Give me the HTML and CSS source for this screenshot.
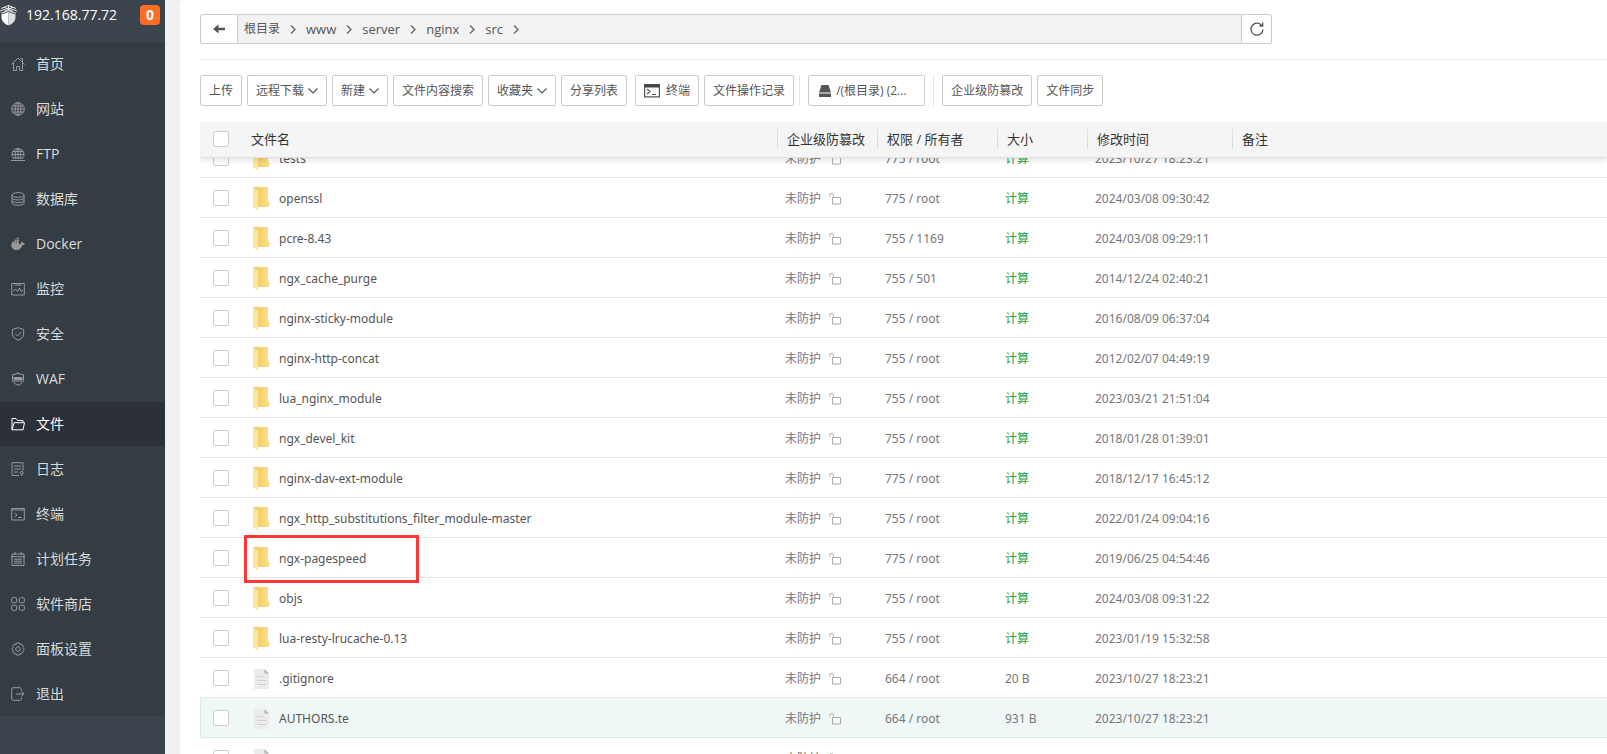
FILE: index.html
```html
<!DOCTYPE html>
<html lang="zh-CN">
<head>
<meta charset="utf-8">
<meta name="viewport" content="width=device-width, initial-scale=1">
<title>文件</title>
<link rel="stylesheet" href="styles.css">
</head>
<body>
<svg class="defs" aria-hidden="true">
  <defs>
    <linearGradient id="fold" x1="0" y1="0" x2="1" y2="0"><stop offset="0" stop-color="#f0c95f"/><stop offset="1" stop-color="#ffe08a"/></linearGradient>
    <symbol id="folder" viewBox="0 0 17 24"><path d="M1 0h14v13l1.500 2v5H4z" fill="url(#fold)"/><path d="M0 0l5 4V24L0 20z" fill="#ffe6a0"/></symbol>
    <symbol id="file" viewBox="0 0 15 20"><path d="M0 0h10.500L15 4.500V20H0z" fill="#ececec"/><path d="M10.500 0L15 4.500h-4.500z" fill="#b4b4b4"/><path d="M3 7.500h7M3 11.500h9M3 15.500h9" stroke="#d0d0d0"/></symbol>
    <symbol id="lock" viewBox="0 0 13 12"><path d="M3.500 4.500h8v6.500h-8zM.5 3.500V2.500a2 2 0 0 1 4 0v2" fill="none" stroke="#aaa"/></symbol>
    <symbol id="right" viewBox="0 0 6 9"><path d="M1 .5l4 4-4 4" fill="none" stroke="#666" stroke-width="1.400"/></symbol>
    <symbol id="down" viewBox="0 0 10 6"><path d="M.5 .5L5 5 9.500 .5" fill="none" stroke="#555" stroke-width="1.200"/></symbol>
  </defs>
</svg>
<div class="app">
  <aside class="sidebar">
    <header class="host">
      <svg class="logo" viewBox="0 0 18 21"><path d="M1 3.500L8.500 .5 16 3.500M0 6l8.500-3L17 6M1 8.200l7.500-2.500L16 8.200M4 2l9 4.500M13 2L4 6.500M8.500 0v6" fill="none" stroke="#e8eaec"/><path d="M1.500 9.500l7-2.500v13.500C4 18.500 1.500 16 1.500 12z" fill="#fff"/><path d="M15.500 9.500l-7-2.500v13.500c4.500-2 7-4.500 7-8.500z" fill="#dcdee0"/></svg>
      <span class="ip">192.168.77.72</span>
      <span class="badge">0</span>
    </header>
    <nav class="menu">
      <a href="#"><svg viewBox="0 0 14 14"><path d="M.5 7.500L7 1l6.500 6.500M2.500 6v7.500h3v-4h3v4h3V6M9.500 1.500h2V5"/></svg>首页</a>
      <a href="#"><svg viewBox="0 0 14 14"><circle cx="7" cy="7" r="6.300"/><ellipse cx="7" cy="7" rx="3" ry="6.300"/><path d="M7 1v12M1 7h12M1.500 4h11M1.500 10h11"/></svg>网站</a>
      <a href="#"><svg viewBox="0 0 14 14"><path d="M2.500 11.500a6 6 0 1 1 9 0M5 12c-1.500-4-1-8 2-11 3 3 3.500 7 2 11M7 1v11M1 7.500h12M2 4.500h10M0 13.500h14M2 11h10"/></svg>FTP</a>
      <a href="#"><svg viewBox="0 0 14 14"><ellipse cx="7" cy="3" rx="6" ry="2.400"/><path d="M1 3v8c0 3 12 3 12 0V3M1 5.700c0 3 12 3 12 0M1 8.400c0 3 12 3 12 0"/></svg>数据库</a>
      <a href="#"><svg viewBox="0 0 14 14"><path class="solid" d="M0 7h10c.3-1 .2-2 .8-2.700.7.500 1 1 1 1.700.8 0 1.500.1 2.200.5-.5 1-1.300 1.500-2.500 1.500C10.500 11 8.500 13 5.500 13 2 13 .3 10.500 0 7zM1.200 4.600h2v2.500h-2zM3.500 4.600h2v2.500h-2zM5.800 4.600h2v2.500h-2zM3.500 2.400h2v1.900h-2zM5.800 2.400h2v1.900h-2zM5.800.5h2v1.600h-2z"/></svg>Docker</a>
      <a href="#"><svg viewBox="0 0 14 14"><path d="M.7 1.500h12.600v11.500H.7zM3.500 3h7M2.500 9.500l2-2.500 2 2.500L8.500 6l1.500 3.500 2-1.500"/></svg>监控</a>
      <a href="#"><svg viewBox="0 0 14 14"><path d="M7 .7L12.700 2.500V7c0 3-2.700 5-5.700 6.300C4 12 1.300 10 1.300 7V2.500zM4.200 6.700l2.300 2.300 3.800-3.800"/></svg>安全</a>
      <a href="#"><svg viewBox="0 0 14 14"><path d="M7 .7L9 2l3.500.7V7c0 3.500-2.500 5-5.500 6.300C4 12 1.500 10.500 1.500 7V2.700L5 2z"/><path class="solid" d="M2.500 5h9v3h-9z"/><path d="M3 9h8M6 1.500h2"/></svg>WAF</a>
      <a href="#" class="active" aria-current="page"><svg viewBox="0 0 14 14"><path d="M1 12.800V1.500h4l1.500 2h5.500v2M1 12.800L3 5.700h10.500l-1.500 7.100z"/></svg>文件</a>
      <a href="#"><svg viewBox="0 0 14 14"><path d="M8 13.500H1V.7h11v8M3 4h7M3 7h7M3 10h4"/><circle cx="10.700" cy="11" r="1.500"/><path d="M10.700 12.500v1.500"/></svg>日志</a>
      <a href="#"><svg viewBox="0 0 14 14"><path d="M.7 1.500h12.600v11.500H.7zM1 3h12M3.500 6l2.500 2-2.500 2M7 10.500h3.500"/></svg>终端</a>
      <a href="#"><svg viewBox="0 0 14 14"><path d="M1 2h12v11.500H1zM0 4.700h14M4 0v3M10 0v3M3 7.200h8M3 9.200h8M3 11.200h8"/></svg>计划任务</a>
      <a href="#"><svg viewBox="0 0 14 14"><rect x=".7" y=".7" width="5" height="5" rx="1"/><rect x="8.300" y=".7" width="5" height="5" rx="1"/><rect x=".7" y="8.300" width="5" height="5" rx="1"/><rect x="8.300" y="8.300" width="5" height="5" rx="1"/></svg>软件商店</a>
      <a href="#"><svg viewBox="0 0 14 14"><path d="M5.500 1h3l.5 1.500 1.800-.3 1.500 2L11.800 5.500 13.300 7l-1.500 1.500.5 1.300-1.500 2L9 11.500 8.500 13h-3L5 11.500l-1.800.3-1.500-2 .5-1.300L.7 7l1.500-1.500-.5-1.300 1.500-2L5 2.500z"/><circle cx="7" cy="7" r="2.300"/></svg>面板设置</a>
      <a href="#"><svg viewBox="0 0 14 14"><path d="M10.500 3.500V2L9 .7H1.700L.7 2v10l1 1.300H9l1.500-1.300v-1.500M5 7h8M10.500 4.500L13 7l-2.500 2.500"/></svg>退出</a>
    </nav>
  </aside>
  <main class="panel">
    <div class="pathbar">
      <button class="back" aria-label="返回"><svg viewBox="0 0 12 10"><path d="M0 5l5.500-4.500V3.700H12v2.600H5.500v3.200z" fill="#555"/></svg></button>
      <nav class="crumbs" aria-label="路径">
        <a href="#">根目录</a><svg><use href="#right"/></svg>
        <a href="#" class="latin">www</a><svg><use href="#right"/></svg>
        <a href="#" class="latin">server</a><svg><use href="#right"/></svg>
        <a href="#" class="latin">nginx</a><svg><use href="#right"/></svg>
        <a href="#" class="latin">src</a><svg><use href="#right"/></svg>
      </nav>
      <button class="refresh" aria-label="刷新"><svg viewBox="0 0 14 14"><path d="M12.400 4.500A6 6 0 1 0 13 7.500M12.700 .5v3.500H9.500" fill="none" stroke="#555" stroke-width="1.300"/></svg></button>
    </div>
    <div class="toolbar">
      <div class="group">
        <button>上传</button>
        <button>远程下载<svg class="caret"><use href="#down"/></svg></button>
        <button>新建<svg class="caret"><use href="#down"/></svg></button>
        <button>文件内容搜索</button>
        <button>收藏夹<svg class="caret"><use href="#down"/></svg></button>
        <button>分享列表</button>
      </div>
      <div class="group">
        <button><svg class="term" viewBox="0 0 16 14"><path d="M.6.6h14.800v12.300H.6zM3 5l3 2.500L3 10M8 10.500h4" fill="none" stroke="#555" stroke-width="1.200"/><path d="M.5.5h15v3H.5z" fill="#444"/></svg>终端</button>
        <button>文件操作记录</button>
      </div>
      <div class="group ruled">
        <button class="disk"><svg viewBox="0 0 12 12"><path d="M2.500 0h7L12 7.500H0zM0 8.500h12V12H0z" fill="#555"/></svg>/(根目录) (2...</button>
      </div>
      <div class="group ruled">
        <button>企业级防篡改</button>
        <button>文件同步</button>
      </div>
    </div>
    <div class="scroller">
      <table class="files">
        <colgroup><col class="c-check"><col class="c-name"><col class="c-guard"><col class="c-perm"><col class="c-size"><col class="c-time"><col></colgroup>
        <thead><tr><th><input type="checkbox" aria-label="全选"></th><th>文件名</th><th><span>企业级防篡改</span></th><th><span>权限 / 所有者</span></th><th><span>大小</span></th><th><span>修改时间</span></th><th><span>备注</span></th></tr></thead>
        <tbody>
          <tr><td><input type="checkbox" aria-label="tests"></td><td><div class="name"><svg class="dir"><use href="#folder"/></svg>tests</div></td><td><div class="guard">未防护<svg><use href="#lock"/></svg></div></td><td>775 / root</td><td><a href="#">计算</a></td><td>2023/10/27 18:23:21</td><td></td></tr>
          <tr><td><input type="checkbox" aria-label="openssl"></td><td><div class="name"><svg class="dir"><use href="#folder"/></svg>openssl</div></td><td><div class="guard">未防护<svg><use href="#lock"/></svg></div></td><td>775 / root</td><td><a href="#">计算</a></td><td>2024/03/08 09:30:42</td><td></td></tr>
          <tr><td><input type="checkbox" aria-label="pcre-8.43"></td><td><div class="name"><svg class="dir"><use href="#folder"/></svg>pcre-8.43</div></td><td><div class="guard">未防护<svg><use href="#lock"/></svg></div></td><td>755 / 1169</td><td><a href="#">计算</a></td><td>2024/03/08 09:29:11</td><td></td></tr>
          <tr><td><input type="checkbox" aria-label="ngx_cache_purge"></td><td><div class="name"><svg class="dir"><use href="#folder"/></svg>ngx_cache_purge</div></td><td><div class="guard">未防护<svg><use href="#lock"/></svg></div></td><td>755 / 501</td><td><a href="#">计算</a></td><td>2014/12/24 02:40:21</td><td></td></tr>
          <tr><td><input type="checkbox" aria-label="nginx-sticky-module"></td><td><div class="name"><svg class="dir"><use href="#folder"/></svg>nginx-sticky-module</div></td><td><div class="guard">未防护<svg><use href="#lock"/></svg></div></td><td>755 / root</td><td><a href="#">计算</a></td><td>2016/08/09 06:37:04</td><td></td></tr>
          <tr><td><input type="checkbox" aria-label="nginx-http-concat"></td><td><div class="name"><svg class="dir"><use href="#folder"/></svg>nginx-http-concat</div></td><td><div class="guard">未防护<svg><use href="#lock"/></svg></div></td><td>755 / root</td><td><a href="#">计算</a></td><td>2012/02/07 04:49:19</td><td></td></tr>
          <tr><td><input type="checkbox" aria-label="lua_nginx_module"></td><td><div class="name"><svg class="dir"><use href="#folder"/></svg>lua_nginx_module</div></td><td><div class="guard">未防护<svg><use href="#lock"/></svg></div></td><td>755 / root</td><td><a href="#">计算</a></td><td>2023/03/21 21:51:04</td><td></td></tr>
          <tr><td><input type="checkbox" aria-label="ngx_devel_kit"></td><td><div class="name"><svg class="dir"><use href="#folder"/></svg>ngx_devel_kit</div></td><td><div class="guard">未防护<svg><use href="#lock"/></svg></div></td><td>755 / root</td><td><a href="#">计算</a></td><td>2018/01/28 01:39:01</td><td></td></tr>
          <tr><td><input type="checkbox" aria-label="nginx-dav-ext-module"></td><td><div class="name"><svg class="dir"><use href="#folder"/></svg>nginx-dav-ext-module</div></td><td><div class="guard">未防护<svg><use href="#lock"/></svg></div></td><td>775 / root</td><td><a href="#">计算</a></td><td>2018/12/17 16:45:12</td><td></td></tr>
          <tr><td><input type="checkbox" aria-label="ngx_http_substitutions_filter_module-master"></td><td><div class="name"><svg class="dir"><use href="#folder"/></svg>ngx_http_substitutions_filter_module-master</div></td><td><div class="guard">未防护<svg><use href="#lock"/></svg></div></td><td>755 / root</td><td><a href="#">计算</a></td><td>2022/01/24 09:04:16</td><td></td></tr>
          <tr><td><input type="checkbox" aria-label="ngx-pagespeed"></td><td><div class="name marked"><svg class="dir"><use href="#folder"/></svg>ngx-pagespeed</div></td><td><div class="guard">未防护<svg><use href="#lock"/></svg></div></td><td>775 / root</td><td><a href="#">计算</a></td><td>2019/06/25 04:54:46</td><td></td></tr>
          <tr><td><input type="checkbox" aria-label="objs"></td><td><div class="name"><svg class="dir"><use href="#folder"/></svg>objs</div></td><td><div class="guard">未防护<svg><use href="#lock"/></svg></div></td><td>755 / root</td><td><a href="#">计算</a></td><td>2024/03/08 09:31:22</td><td></td></tr>
          <tr><td><input type="checkbox" aria-label="lua-resty-lrucache-0.13"></td><td><div class="name"><svg class="dir"><use href="#folder"/></svg>lua-resty-lrucache-0.13</div></td><td><div class="guard">未防护<svg><use href="#lock"/></svg></div></td><td>755 / root</td><td><a href="#">计算</a></td><td>2023/01/19 15:32:58</td><td></td></tr>
          <tr><td><input type="checkbox" aria-label=".gitignore"></td><td><div class="name"><svg class="doc"><use href="#file"/></svg>.gitignore</div></td><td><div class="guard">未防护<svg><use href="#lock"/></svg></div></td><td>664 / root</td><td>20 B</td><td>2023/10/27 18:23:21</td><td></td></tr>
          <tr class="hover"><td><input type="checkbox" aria-label="AUTHORS.te"></td><td><div class="name"><svg class="doc"><use href="#file"/></svg>AUTHORS.te</div></td><td><div class="guard">未防护<svg><use href="#lock"/></svg></div></td><td>664 / root</td><td>931 B</td><td>2023/10/27 18:23:21</td><td></td></tr>
          <tr><td><input type="checkbox" aria-label="文件"></td><td><div class="name"><svg class="doc"><use href="#file"/></svg></div></td><td><div class="guard">未防护<svg><use href="#lock"/></svg></div></td><td></td><td></td><td></td><td></td></tr>
        </tbody>
      </table>
    </div>
  </main>
</div>
<script src="app.js"></script>
</body>
</html>
```
FILE: styles.css
```css
*, *::after { box-sizing: border-box; }
body {
  margin: 0;
  font: 12px/20px "Open Sans", "Noto Sans CJK SC", sans-serif;
  color: #555;
  background: #f1f1f1;
}
a { color: inherit; text-decoration: none; }
button {
  font: inherit;
  color: inherit;
  background: #fff;
  border: 1px solid #ccc;
  border-radius: 2px;
  cursor: pointer;
}
svg { flex: none; display: block; }
.defs { position: absolute; width: 0; height: 0; }
.app { display: flex; gap: 15px; height: 100vh; overflow: hidden; }

.sidebar { flex: none; width: 165px; background: #3c444d; }
.host { display: flex; align-items: center; height: 42px; padding: 0 5px 12px 0; color: #fff; font-size: 14px; }
.logo { width: 18px; height: 21px; }
.ip { flex: 1; padding-left: 8px; }
.badge {
  width: 20px;
  border-radius: 4px;
  background: #ff6c23;
  font-weight: 700;
  text-align: center;
}
.menu { display: flex; flex-direction: column; gap: 1px; background: #353d44; }
.menu a {
  display: flex;
  align-items: center;
  gap: 11px;
  height: 44px;
  padding-left: 11px;
  color: #d8dadc;
  font-size: 14px;
}
.menu svg { width: 14px; height: 14px; fill: none; stroke: #999; }
.menu .solid { fill: #999; stroke: none; }
.menu .active { background: #2c3138; color: #fff; }
.menu .active svg { stroke: #fff; }

.panel {
  flex: 1;
  min-width: 0;
  display: flex;
  flex-direction: column;
  padding: 14px 0 0 20px;
  background: #fff;
  border-radius: 4px 0 0 0;
}
.pathbar { flex: none; display: flex; width: 1072px; max-width: 100%; height: 30px; }
.pathbar button { display: flex; align-items: center; justify-content: center; padding: 0; }
.back { width: 38px; border-radius: 2px 0 0 2px; }
.back svg { width: 12px; height: 10px; }
.refresh { width: 31px; border-radius: 0 2px 2px 0; }
.refresh svg { width: 14px; height: 14px; }
.crumbs {
  flex: 1;
  display: flex;
  align-items: center;
  gap: 10px;
  padding-left: 6px;
  background: #f2f2f2;
  border: solid #ccc;
  border-width: 1px 0;
}
.crumbs svg { width: 6px; height: 9px; }
.crumbs .latin { font-size: 13px; }

.toolbar {
  flex: none;
  display: flex;
  gap: 8px;
  margin-top: 15px;
  padding: 15px 0 16px;
  border-top: 1px solid #ececec;
}
.group { display: flex; gap: 5px; }
.ruled { padding-left: 8px; border-left: 1px solid #e6e6e6; }
.group + .ruled { margin-left: -3px; }
.ruled + .ruled { margin-left: 0; }
.toolbar button {
  display: flex;
  align-items: center;
  height: 31px;
  padding: 0 8px;
  white-space: nowrap;
}
.caret { width: 10px; height: 6px; margin-left: 4px; }
.term { width: 16px; height: 14px; margin-right: 6px; }
.toolbar .disk { width: 117px; padding-left: 10px; }
.disk svg { width: 12px; height: 12px; margin-right: 5px; }

.scroller { flex: 1; min-height: 0; overflow: auto; scrollbar-width: none; }
.files { width: 100%; table-layout: fixed; border-spacing: 0; }
.c-check { width: 43px; }
.c-name { width: 534px; }
.c-guard { width: 100px; }
.c-perm { width: 120px; }
.c-size { width: 90px; }
.c-time { width: 145px; }
.files thead {
  position: sticky;
  top: 0;
  z-index: 2;
  box-shadow: 0 2px 6px #0000001f;
}
.files th {
  height: 36px;
  padding: 0 0 2px 8px;
  background: #f5f5f5;
  border-bottom: 1px solid #e0e0e0;
  color: #333;
  font-size: 13px;
  font-weight: 400;
  text-align: left;
  white-space: nowrap;
}
.files th:nth-child(n+3) { padding-left: 0; }
.files th span { display: block; padding-left: 9px; border-left: 1px solid #ddd; }
.files td {
  height: 40px;
  padding: 2px 0 0 8px;
  border-bottom: 1px solid #e6e6e6;
  color: #777;
  font-family: "Noto Sans", "Noto Sans CJK SC", sans-serif;
  white-space: nowrap;
}
.files tr > :first-child { padding-left: 13px; }
.files td:first-child { padding-top: 0; }
.files td a { color: #20a53a; }
.files input {
  appearance: none;
  display: block;
  width: 16px;
  height: 16px;
  margin: 0;
  border: 1px solid #ccc;
  border-radius: 2px;
  background: #fff;
}
.name { position: relative; display: flex; align-items: center; height: 24px; padding-left: 2px; color: #555; }
.dir { width: 17px; height: 24px; margin-right: 9px; }
.doc { width: 15px; height: 20px; margin: 0 10px 0 1px; }
.guard { display: flex; align-items: center; gap: 8px; }
.guard svg { width: 13px; height: 12px; }
.marked::after {
  content: "";
  position: absolute;
  z-index: 1;
  top: -12px;
  left: -7px;
  width: 175px;
  height: 48px;
  border: 3px solid #ff3837;
}
.hover td { background: #eff8f7; border-color: #d9ede8; }
.hover td:first-child { box-shadow: inset 1px 0 #d9ede8; }
```
FILE: app.js
```js
document.querySelector(".scroller").scrollTop = 20;
```
